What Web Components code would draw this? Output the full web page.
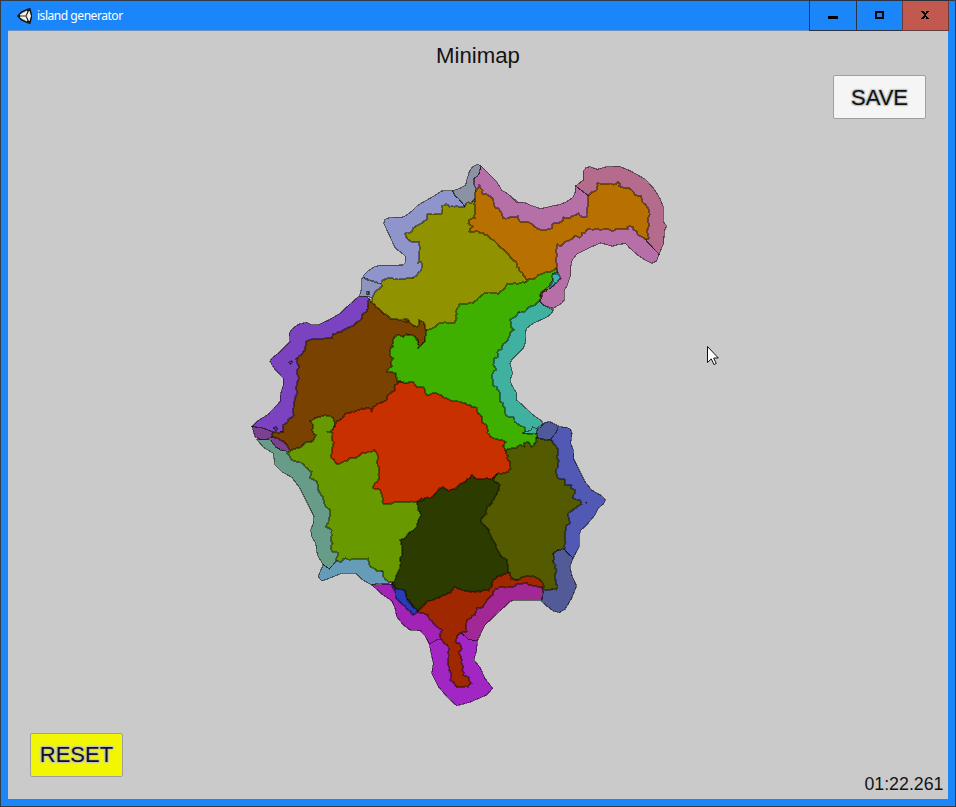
<!DOCTYPE html>
<html lang="en">
<head>
<meta charset="utf-8">
<title>island generator</title>
<style>
html,body{margin:0;height:100%;overflow:hidden;background:#1b86f9}
</style>
</head>
<body>
<app-window></app-window>
<script>
class CaptionButton extends HTMLElement {
  connectedCallback() {
    this.attachShadow({mode:'open'}).innerHTML = `<style>
      :host{display:block;box-sizing:border-box;height:31px;border:1px solid #2b3340;border-left-width:1px;border-right:0;background:#1b86f9}
      :host([kind=close]){background:#c2594f;border-color:#653b3c;border-right:1px solid #653b3c;border-top-color:#2b2f36}
      svg{display:block;width:100%;height:29px}
    </style><svg viewBox="0 0 46 29" preserveAspectRatio="xMidYMid meet" shape-rendering="crispEdges">${{
      min:'<path d="M18 15h10v3H18z"/>',
      max:'<path fill-rule="evenodd" d="M18 10h10v8H18zM20 12v4h6v-4z"/>',
      close:'<path d="M18 10h3v1h1v1h1v-1h1v-1h3v1h-1v1h-1v1h-1v2h1v1h1v1h1v1h-3v-1h-1v-1h-1v1h-1v1h-3v-1h1v-1h1v-1h1v-2h-1v-1h-1v-1h-1z"/>'
    }[this.getAttribute('kind')]}</svg>`;
  }
}
customElements.define('caption-button', CaptionButton);

class TitleBar extends HTMLElement {
  connectedCallback() {
    this.attachShadow({mode:'open'}).innerHTML = `<style>
      :host{display:flex;height:31px;box-sizing:border-box;background:#1b86f9;border-top:1px solid #333b44;padding-left:16px;align-items:center;color:#fff;font:12px/16px "Noto Sans","Open Sans",sans-serif}
      .icon{display:block;width:16px;height:16px;flex:none;margin-top:-1px}
      .name{flex:1;margin-left:4px;white-space:nowrap;letter-spacing:-.5px;font-size:12.1px}
      .buttons{display:grid;grid-template-columns:47px 46px 47px;align-self:flex-start;margin-top:-1px;margin-right:6px}
    </style>
    <svg class="icon" viewBox="0 0 16 16"><path d="M0 8L4 3.500 11 .5 13.500 0l.5 2.500 1 3.500v4l-1 3.500-.5 2.500-2.500-.5L4 12.500z" fill="#151515"/><path d="M4.500 5.700L10 3 8.500 7H3.300zM3.300 9h5.200l1.500 4-5.500-2.700zM10 8l2.200-4.600L13.500 8l-1.300 4.600z" fill="#f4f2ea" stroke="#f4f2ea" stroke-width=".9"/><path d="M3 8h6.200" stroke="#aaa" stroke-width="1"/></svg>
    <span class="name"><slot></slot></span>
    <div class="buttons"><caption-button kind="min"></caption-button><caption-button kind="max"></caption-button><caption-button kind="close"></caption-button></div>`;
  }
}
customElements.define('title-bar', TitleBar);

class GameButton extends HTMLElement {
  connectedCallback() {
    this.attachShadow({mode:'open'}).innerHTML = `<style>
      :host{display:block}
      button{display:block;width:93px;height:44px;padding:var(--drop,1px) 0 0;box-sizing:border-box;border:1px solid #a0a0a0;border-radius:2px;background:var(--face,#f5f5f5);color:#111;font:22px/24px "Liberation Sans",Arial,sans-serif;text-shadow:0 0 1px #bbb,1px 1px 1px #c4c4c4,-1px -1px 1px #c4c4c4,1px -1px 1px #c4c4c4,-1px 1px 1px #c4c4c4}
    </style><button><slot></slot></button>`;
  }
}
customElements.define('game-button', GameButton);

// Outlines are noted on separate sheets, three units to a pixel.
// Each sheet has its own origin on the window.
const SHEETS = {A:[350,155],B:[510,155],C:[240,290],D:[400,270],E:[250,400],F:[420,410],G:[360,560]};

// Coast first, inland on top: [fill, outline, rough edge?]
const REGIONS = [
['#8f94cb','A 40,367 42,360 55,347 72,336 90,331 160,330 167,322 165,302 150,290 136,280 120,245 101,205 105,193 118,188 160,186 180,173 205,150 225,138 250,124 275,108 308,107 315,122 325,130 335,142 345,155 330,200 250,250 240,350 100,400 80,380 60,375'],
['#8f94bc','A 40,367 50,374 70,380 85,385 100,385 100,410 75,430 55,425 28,424 35,400 35,372'],
['#b66fa7','A 392,32 400,40 420,60 440,80 455,105 475,118 490,132 507,143 B 0,122 18,141 45,143 60,150 92,161 130,152 148,149 170,140 188,128 195,115 197,93 240,125 250,150 235,220 100,250 0,220 A 400,130 370,100 372,70 388,55'],
['#8b92a3','A 308,107 330,100 347,90 350,75 358,50 368,35 382,28 392,32 388,55 380,65 372,70 372,90 378,100 375,130 365,145 350,145 345,155 335,142 325,130 315,122'],
['#40b0a0','D 415,90 430,105 460,120 455,130 440,142 400,160 380,175 376,190 377,215 370,235 335,270 330,280 338,310 330,330 335,345 350,370 350,390 375,412 400,435 425,453 430,462 410,475 410,495 370,500 350,500 250,350 260,250 320,150'],
['#b66fa7','B 410,258 447,298 440,318 425,325 410,318 385,302 360,280 347,266 325,268 308,274 272,264 245,275 200,298 187,315 182,335 182,360 170,395 163,405 163,435 155,445 130,460 115,455 100,450 90,440 92,410 120,400 150,370 140,350 100,300 200,220 360,200'],
['#b56c8c','B 197,93 220,75 220,48 228,38 240,35 262,43 290,35 328,34 360,47 405,72 430,98 450,130 460,155 460,200 470,213 463,228 461,265 447,298 410,258 400,200 350,100 260,130 240,125'],
['#5159b4','F 415,50 440,52 452,58 456,70 452,100 460,120 462,148 480,185 495,215 515,240 545,257 557,270 550,282 535,295 525,315 500,345 483,360 478,375 478,410 460,443 448,435 430,415 400,400 400,100 392,88'],
['#505a9b','F 375,37 390,35 415,48 410,65 392,88 380,92 350,82 345,70 352,58 365,48'],
['#525a98','F 400,430 410,422 430,415 448,435 460,443 450,470 455,495 470,528 455,565 435,598 418,608 400,603 380,588 365,575 372,535 410,540 400,480'],
['#7b43bf','C 355,20 330,42 300,70 270,88 235,104 215,104 200,97 175,103 155,118 148,130 150,155 120,185 95,205 90,215 105,238 130,265 130,285 122,310 120,335 85,372 50,395 36,410 80,418 100,428 130,425 200,400 200,200 360,120 390,30 380,20'],
['#679c88','E 20,118 60,118 70,130 90,150 120,155 250,200 290,470 262,482 238,507 220,495 202,465 197,430 185,410 182,390 190,370 192,350 175,315 150,265 125,232 95,215 75,195 70,160 40,142'],
['#7c4090','C 36,410 60,412 80,418 98,426 100,440 85,447 60,448 45,440'],
['#7c4090','C 95,440 120,440 160,465 148,480 130,482 108,472 95,455'],
['#679cb8','E 220,495 212,510 205,530 215,543 230,538 275,520 318,520 335,538 365,555 385,550 415,552 425,545 400,515 365,500 350,465 262,480 238,507'],
['#a226c4','G 208,252 212,275 220,310 215,340 235,380 265,415 290,437 330,427 380,405 398,385 375,355 360,322 342,300 350,270 352,243 325,238 308,222 290,220 245,225'],
['#a224b6','G 35,75 65,102 95,122 105,145 110,170 130,195 150,210 180,212 195,228 208,252 230,240 245,238 300,200 240,140 172,148 100,72'],
['#2c3c00','F 0,240 100,190 235,190 260,230 230,340 280,480 250,520 G 400,115 172,155 155,135 140,115 135,92 105,88 97,70 E 430,500 430,420 480,320 490,300',1],
['#a22896','G 352,243 375,195 450,125 460,121 545,121 550,80 530,62 480,62 410,70 280,200 290,215 308,222 325,238'],
['#909200','A 65,430 75,412 95,395 95,378 118,370 140,373 170,370 195,365 210,350 218,330 212,320 203,325 208,318 208,262 180,258 168,245 165,235 185,230 190,218 215,205 232,193 232,178 258,178 277,175 277,152 288,148 298,155 345,155 350,143 362,145 372,135 420,240 520,320 D 390,30 250,130 165,190 80,200 30,215 0,195 C 450,150 392,60',1],
['#b87000','A 375,115 380,105 388,90 398,105 395,115 410,118 428,130 435,158 445,160 460,190 475,190 480,187 B 25,183 30,200 60,203 75,215 95,225 125,220 130,205 155,200 160,187 180,190 205,175 215,185 230,185 230,165 235,150 235,125 245,112 260,105 262,85 318,88 325,80 328,93 350,98 370,110 375,120 392,122 395,138 408,150 418,170 415,188 418,210 412,225 417,250 405,253 385,240 380,228 370,225 368,215 352,215 355,222 325,222 305,228 290,222 235,222 225,235 215,235 210,248 195,243 175,258 165,260 155,272 142,268 138,285 142,300 138,315 142,348 110,372 58,384 40,360 20,335 18,320 0,307 A 470,292 445,270 430,255 400,235 380,228 358,230 360,222 368,215 355,205 358,195 375,190 374,170 375,140',1],
['#7a4200','C 388,28 425,65 440,75 450,85 480,90 505,97 D 10,148 20,147 35,163 50,170 58,165 57,150 70,155 75,175 85,185 82,205 72,220 55,235 55,215 45,200 20,193 C 500,160 480,290 500,340 400,380 315,395 290,420 260,460 230,475 180,488 160,483 148,480 140,465 120,450 98,440 95,432 105,425 115,430 130,425 130,405 150,385 162,375 160,360 165,330 172,310 168,290 175,270 172,240 178,230 168,205 185,195 195,180 197,155 215,148 260,145 275,145 280,132 310,120 340,108 365,85 365,75 380,65 383,45',1],
['#545a00','F 235,190 250,150 258,110 300,90 340,80 355,85 375,90 392,90 405,105 415,125 412,145 415,160 408,180 415,205 435,208 435,225 455,225 452,235 465,240 460,265 480,270 485,283 470,292 450,305 443,318 450,340 440,345 435,365 435,415 410,422 400,430 402,460 410,480 405,500 412,535 390,540 370,540 350,512 310,508 280,512 265,485 262,450 245,440 230,415 212,375 208,360 182,335 190,320 200,310 200,290 215,280 230,255 240,225 220,208',1],
['#a02800','G 172,155 200,125 230,115 250,105 270,100 285,80 300,87 330,95 385,92 395,80 400,60 415,48 450,40 452,58 475,60 485,50 520,48 545,65 552,82 540,80 510,75 500,68 490,70 470,72 455,82 420,80 400,95 400,105 380,122 370,140 350,145 345,165 320,180 320,215 300,218 290,235 285,245 300,250 305,265 297,275 305,300 310,345 325,350 328,362 335,370 325,380 290,380 270,360 273,345 263,310 265,260 245,240 240,230 245,210 225,195 210,180 205,165',1],
['#689a00','E 185,62 195,55 210,50 225,45 250,55 255,68 250,90 270,110 300,120 370,120 410,200 420,290 500,290 500,310 505,330 513,345 505,365 500,380 475,400 465,415 450,420 455,440 455,460 450,480 452,490 445,515 432,545 415,545 400,530 400,515 380,512 360,500 355,475 340,477 280,477 270,487 258,480 265,458 248,455 242,440 248,430 242,420 245,390 228,380 235,370 240,330 228,320 218,290 205,270 200,245 180,235 185,215 172,205 160,193 135,183 125,180 120,170 110,160 125,150 145,145 165,128 190,122 197,105 188,95 190,75 180,62',1],
['#c83000','C 510,275 478,275 465,285 465,300 445,315 440,330 420,340 400,350 395,365 390,355 365,355 345,365 315,372 300,390 285,402 280,415 270,425 E 232,95 248,100 245,120 252,128 245,150 245,175 260,193 290,183 300,173 315,175 335,160 365,155 372,150 385,170 382,190 388,210 385,240 375,250 370,265 390,270 397,290 400,312 420,313 440,307 470,307 500,305 515,295 F 0,275 15,263 30,265 55,240 70,232 85,242 105,238 120,222 150,205 155,195 170,207 200,205 215,210 235,190 265,185 272,175 270,155 262,145 258,122 260,90 200,0 D 200,380 100,350 0,320',1],
['#40b000','B 55,373 75,370 85,360 100,355 115,352 137,340 140,352 128,358 128,378 118,395 100,408 92,415 90,435 D 415,95 400,108 385,112 375,125 355,127 345,140 330,150 332,170 342,180 330,190 325,210 310,222 305,238 295,240 293,262 282,265 280,285 288,300 275,315 278,345 290,350 300,370 300,395 310,400 315,430 325,440 340,440 350,460 370,470 380,487 368,490 410,492 410,515 395,530 385,515 372,518 375,530 360,525 350,533 330,537 315,540 310,528 318,515 290,507 272,500 262,488 260,465 245,455 245,440 232,425 232,415 210,405 180,395 155,392 130,382 110,370 80,375 70,352 50,350 40,337 20,340 0,333 C 470,272 468,250 440,245 445,238 455,230 453,215 460,205 450,195 452,172 460,170 458,150 470,135 490,140 500,133 D 20,193 45,200 55,215 55,235 75,215 75,200 82,180 105,170 120,158 165,158 170,145 168,125 178,102 200,102 220,98 235,85 260,68 275,68 295,73 310,60 320,42 345,40 375,38',1],
['#283cb8','G 97,70 105,88 135,92 140,115 155,135 172,155 158,165 145,150 125,130 108,115',1],
['#40b0b4','B 128,358 145,355 152,370 135,385 120,400 118,395 128,378',1],
['#40b0a0','D 378,484 392,482 398,470 412,478 408,491 370,490'],
['#9c3c10','B 92,418 100,406 112,403 110,408 98,412 95,430'],
['#5c3898','C 100,412 110,410 112,420 106,422'],
['#5c3898','C 145,217 155,213 158,217 151,223'],
['#5c5890','C 380,4 387,4 387,14 380,14'],
['#40408c','F 498,277 500,277 500,279 498,279']
];

class IslandMap extends HTMLElement {
  // Turns a sheet outline into window coordinates.
  points(text) {
    let origin;
    const out = [];
    for (const t of text.split(' ')) {
      if (SHEETS[t]) { origin = SHEETS[t]; continue; }
      const [x, y] = t.split(',').map(Number);
      out.push([origin[0] + x / 3 - 8, origin[1] + y / 3 - 31]);
    }
    return out;
  }
  // Breaks long edges into small steps so that inland borders look ragged.
  ragged(p) {
    const out = [];
    p.forEach((a, i) => {
      const b = p[(i + 1) % p.length], dx = b[0] - a[0], dy = b[1] - a[1];
      const len = Math.hypot(dx, dy), n = Math.max(1, Math.round(len / 2.6));
      for (let k = 0; k < n; k++) {
        const x = a[0] + dx * k / n, y = a[1] + dy * k / n;
        const h = Math.sin(Math.round(x) * 12.9 + Math.round(y) * 78.2) * 43758.5;
        const j = k ? ((h - Math.floor(h)) - .5) * 1.7 : 0;
        out.push([x - dy / len * j, y + dx / len * j]);
      }
    });
    return out;
  }
  connectedCallback() {
    const shapes = REGIONS.map(([fill, text, rough]) => {
      let p = this.points(text);
      if (rough) p = this.ragged(p);
      return `<polygon fill="${fill}" stroke-width="${rough ? 1.9 : 1.1}" stroke-opacity="${rough ? .4 : .5}" points="${p.map(q => q.map(v => v.toFixed(1)).join()).join(' ')}"/>`;
    }).join('');
    this.attachShadow({mode:'open'}).innerHTML = `<style>
      :host{display:block}
      svg{display:block;width:940px;height:768px}
    </style><svg viewBox="0 0 940 768" shape-rendering="crispEdges" stroke="#000" stroke-linejoin="round">${shapes}</svg>`;
  }
}
customElements.define('island-map', IslandMap);

class AppWindow extends HTMLElement {
  connectedCallback() {
    this.attachShadow({mode:'open'}).innerHTML = `<style>
      :host{display:flex;flex-direction:column;box-sizing:border-box;width:956px;height:807px;border:solid #333b44;border-width:0 1px 1px;background:#1b86f9}
      main{display:grid;position:relative;width:940px;height:768px;margin-left:7px;background:#cacaca;box-shadow:0 -1px #6793c5;grid-template:1fr / 1fr;font-family:"Liberation Sans",Arial,sans-serif;color:#141414}
      title-bar{position:relative;z-index:1;background:none}
      main>*{grid-area:1/1}
      h1{margin:12px 0 0;justify-self:center;align-self:start;font-size:22.2px;line-height:26px;font-weight:400}
      .save{justify-self:end;align-self:start;margin:44px 22px 0 0}
      .reset{justify-self:start;align-self:end;margin:0 0 22px 22px;--face:#f2f600;--drop:0px}
      time{justify-self:end;align-self:end;margin:0 4.500px 5px 0;font-size:17.8px;line-height:20px}
      .pointer{position:absolute;left:698px;top:314px;width:14px;height:21px}
    </style>
    <title-bar>island generator</title-bar>
    <main>
      <island-map></island-map>
      <h1>Minimap</h1>
      <game-button class="save">SAVE</game-button>
      <game-button class="reset">RESET</game-button>
      <time>01:22.261</time>
      <svg class="pointer" viewBox="0 0 14 21"><path d="M1.5 1.5v16l3.800-3.600 2.600 5.600 2.300-1-2.500-5.500h4.600z" fill="#fff" stroke="#111"/></svg>
    </main>`;
  }
}
customElements.define('app-window', AppWindow);
</script>
</body>
</html>
